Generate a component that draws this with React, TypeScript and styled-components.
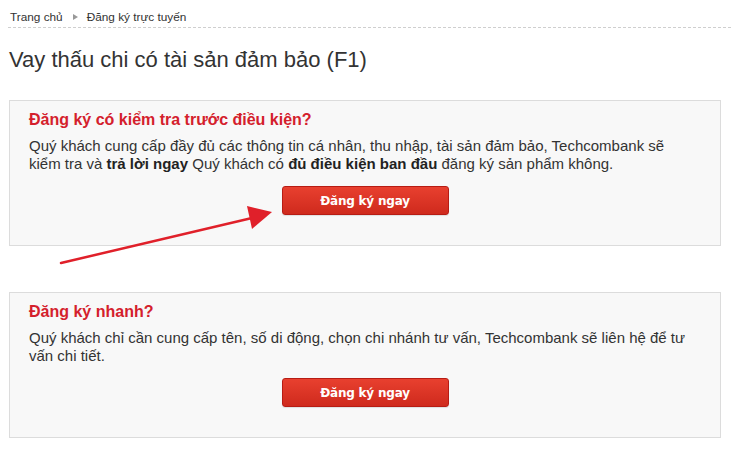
import React from "react";
import styled, { createGlobalStyle } from "styled-components";

const Global = createGlobalStyle`
  html, body { margin: 0; padding: 0; background: #fff; }
  body { font-family: "Liberation Sans", Arial, sans-serif; color: #333; }
`;

const Page = styled.div`
  position: relative;
  width: 731px;
  height: 449px;
  overflow: hidden;
`;

const Breadcrumb = styled.div`
  display: flex;
  align-items: center;
  gap: 8px;
  margin-left: 8px;
  padding: 7px 0 0 2px;
  height: 20px;
  border-bottom: 1px dashed #cfcfcf;
  font-size: 11.8px;
  color: #333;
`;

const Crumb = styled.span``;

const Caret = styled.span`
  width: 0;
  height: 0;
  border-top: 3.5px solid transparent;
  border-bottom: 3.5px solid transparent;
  border-left: 5px solid #999;
  margin: 0 1px 0 2px;
`;

const Title = styled.h1`
  margin: 19px 0 0 9px;
  font-size: 22px;
  font-weight: normal;
  line-height: 26px;
  color: #333;
`;

const Content = styled.div`
  display: flex;
  flex-direction: column;
  gap: 46px;
  margin: 27px 0 0 9px;
  width: 712px;
`;

const Card = styled.section`
  box-sizing: border-box;
  height: 146px;
  background: #f8f8f8;
  border: 1px solid #dcdcdc;
  padding: 9px 17px 0 19px;
`;

const CardTitle = styled.h2`
  margin: 0;
  font-size: 16px;
  font-weight: bold;
  line-height: 20px;
  color: #d4202c;
`;

const CardText = styled.p`
  margin: 7px 0 0 0;
  max-width: 666px;
  font-size: 15px;
  line-height: 18px;
  color: #333;
  b { color: #222; }
`;

const ButtonRow = styled.div`
  display: flex;
  justify-content: center;
  margin-top: 13px;
  padding-right: 2px;
`;

const Button = styled.button`
  width: 167px;
  height: 29px;
  border: 1px solid #b71c14;
  border-radius: 3px;
  background: linear-gradient(#e8402f, #cf2a1d);
  color: #fff;
  font-family: "DejaVu Sans", Tahoma, sans-serif;
  font-size: 12px;
  font-weight: bold;
  letter-spacing: -0.2px;
  cursor: pointer;
  box-shadow: 0 1px 1px rgba(0,0,0,0.1);
`;

const Arrow = styled.svg`
  position: absolute;
  left: 0;
  top: 0;
  pointer-events: none;
`;

export default function App() {
  return (
    <Page>
      <Global />
      <Breadcrumb>
        <Crumb>Trang chủ</Crumb>
        <Caret />
        <Crumb>Đăng ký trực tuyến</Crumb>
      </Breadcrumb>
      <Title>Vay thấu chi có tài sản đảm bảo (F1)</Title>
      <Content>
        <Card>
          <CardTitle>Đăng ký có kiểm tra trước điều kiện?</CardTitle>
          <CardText>
            Quý khách cung cấp đầy đủ các thông tin cá nhân, thu nhập, tài sản đảm bảo, Techcombank sẽ kiểm tra và <b>trả lời ngay</b> Quý khách có <b>đủ điều kiện ban đầu</b> đăng ký sản phẩm không.
          </CardText>
          <ButtonRow>
            <Button>Đăng ký ngay</Button>
          </ButtonRow>
        </Card>
        <Card>
          <CardTitle>Đăng ký nhanh?</CardTitle>
          <CardText>
            Quý khách chỉ cần cung cấp tên, số di động, chọn chi nhánh tư vấn, Techcombank sẽ liên hệ để tư vấn chi tiết.
          </CardText>
          <ButtonRow>
            <Button>Đăng ký ngay</Button>
          </ButtonRow>
        </Card>
      </Content>
      <Arrow width="731" height="449" viewBox="0 0 731 449">
        <line x1="61" y1="263" x2="252" y2="218" stroke="#e0202a" strokeWidth="2.5" strokeLinecap="round" />
        <polygon points="272,212 247,206 252,229" fill="#e0202a" />
      </Arrow>
    </Page>
  );
}
